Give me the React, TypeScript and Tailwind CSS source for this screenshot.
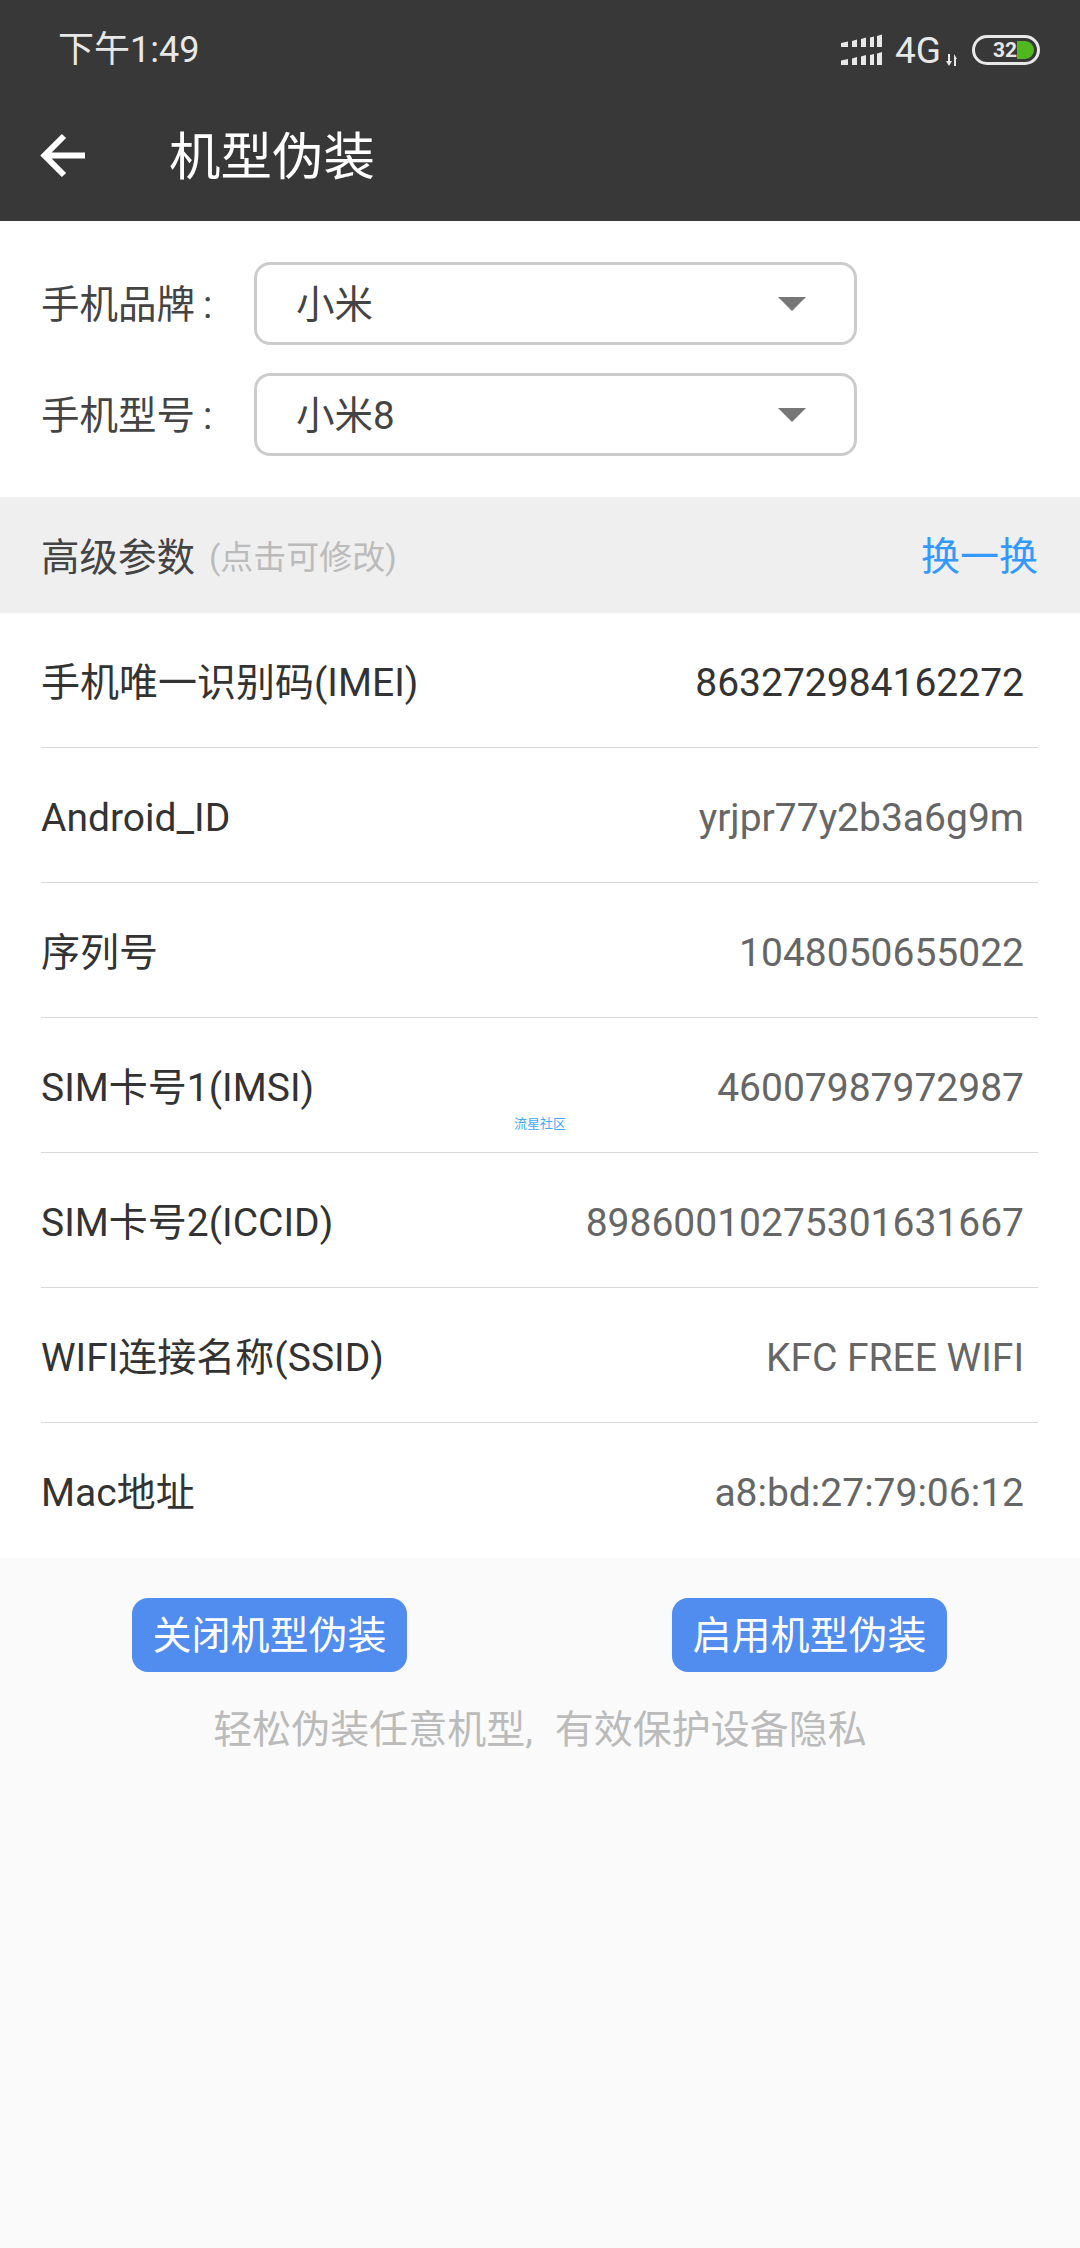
const FONT = "font-['Roboto','Noto_Sans_CJK_SC',sans-serif]";

const rows = [
  { label: "手机唯一识别码(IMEI)", value: "863272984162272", dark: true },
  { label: "Android_ID", value: "yrjpr77y2b3a6g9m" },
  { label: "序列号", value: "1048050655022" },
  { label: "SIM卡号1(IMSI)", value: "46007987972987" },
  { label: "SIM卡号2(ICCID)", value: "89860010275301631667" },
  { label: "WIFI连接名称(SSID)", value: "KFC FREE WIFI" },
  { label: "Mac地址", value: "a8:bd:27:79:06:12" },
];

function SignalIcon() {
  return (
    <svg width="41" height="32" viewBox="0 0 41 32" fill="#e8e8e8">
      <path d="M0 9 7 7.500V13H0zM11 7l5-1.500V13h-5zM20 5l5-1.500V13h-5zM29 3.500l4-1V13h-4zM36 2l5-1.500V13h-5z" />
      <path d="M0 26.500 7 25v6H0zM11 24.500l5-1.500v8h-5zM20 22.500l5-1.500v10h-5zM29 21l4-1v11h-4zM36 19.500l5-1.500v13h-5z" />
    </svg>
  );
}

function BatteryIcon() {
  return (
    <div className="relative h-[30px] w-[68px] overflow-hidden rounded-full border-[3px] border-[#e8e8e8]">
      <div className="absolute right-[3px] top-[3px] h-[18px] w-[17px] rounded-r-full bg-[#4fb81f]" />
      <span className="absolute left-[18px] top-0 text-[21px] font-bold leading-[24px] text-[#e8e8e8]">32</span>
    </div>
  );
}

function SelectBox({ label, value }: { label: string; value: string }) {
  return (
    <div className="flex items-center">
      <span className="w-[254px] shrink-0 whitespace-nowrap pl-[41px] pt-[3px] text-[38.500px] text-[#444]">
        {label}
        <span className="ml-[8px]">:</span>
      </span>
      <div className="flex h-[83px] w-[603px] items-center justify-between rounded-[16px] border-[3px] border-[#ccc] pl-[39px] pr-[48px]">
        <span className="pt-[3px] text-[38.500px] text-[#444]">{value}</span>
        <div className="h-0 w-0 border-x-[14px] border-t-[14px] border-x-transparent border-t-[#777]" />
      </div>
    </div>
  );
}

export default function App() {
  return (
    <div className={`flex min-h-[2248px] w-[1080px] flex-col bg-[#fafafa] ${FONT}`}>
      <header className="h-[221px] bg-[#383838]">
        <div className="flex h-[100px] items-center justify-between pl-[58px] pr-[40px]">
          <span className="text-[36px] text-[#e8e8e8]">下午1:49</span>
          <div className="flex items-center gap-[13px]">
            <SignalIcon />
            <div className="flex items-end">
              <span className="text-[37px] leading-none text-[#e8e8e8]">4G</span>
              <svg width="14" height="12" viewBox="0 0 14 12" fill="#e8e8e8" className="mb-[3px] ml-[4px]">
                <path d="M3 0h2v7h2L4 12 1 7h2zM9 0l3 5h-1v7H9z" />
              </svg>
            </div>
            <BatteryIcon />
          </div>
        </div>
        <div className="flex h-[112px] items-center pl-[40px]">
          <svg width="46" height="46" viewBox="0 0 46 46" fill="none" stroke="#fff" strokeWidth="6">
            <path d="M45 22.500H5M24 3 4.500 22.500 24 42" />
          </svg>
          <span className="ml-[83px] pt-[4px] text-[51.500px] leading-none text-white">机型伪装</span>
        </div>
      </header>

      <section className="flex h-[276px] flex-col gap-[28px] bg-white pt-[41px]">
        <SelectBox label="手机品牌" value="小米" />
        <SelectBox label="手机型号" value="小米8" />
      </section>

      <div className="flex h-[116px] items-center justify-between bg-[#efefef] pl-[41px] pr-[42px] pt-[5px]">
        <div className="flex items-center gap-[14px]">
          <span className="text-[38.500px] text-[#444]">高级参数</span>
          <span className="text-[33px] text-[#bbb]">(点击可修改)</span>
        </div>
        <span className="text-[39px] text-[#3399ff]">换一换</span>
      </div>

      <section className="relative bg-white pl-[41px] pr-[42px]">
        {rows.map((row, index) => (
          <div
            key={row.label}
            className={`flex h-[135px] items-center justify-between pr-[14px] pt-[6px] text-[39px] ${
              index < rows.length - 1 ? "border-b border-[#d8d8d8]" : ""
            }`}
          >
            <span className="text-[#333]">{row.label}</span>
            <span className={row.dark ? "text-[#333]" : "text-[#666]"}>{row.value}</span>
          </div>
        ))}
        <span className="absolute left-[514px] top-[504px] text-[13px] leading-none text-[#45a8ff]">流星社区</span>
      </section>

      <div className="flex justify-between pl-[132px] pr-[133px] pt-[40px]">
        <button className="h-[74px] w-[275px] rounded-[16px] bg-[#518cef] pt-[2px] text-[39px] text-white">关闭机型伪装</button>
        <button className="h-[74px] w-[275px] rounded-[16px] bg-[#518cef] pt-[2px] text-[39px] text-white">启用机型伪装</button>
      </div>
      <p className="mt-[29px] text-center text-[39px] text-[#bbb]">
        轻松伪装任意机型<span className="mr-[22px]">,</span>有效保护设备隐私
      </p>
    </div>
  );
}
